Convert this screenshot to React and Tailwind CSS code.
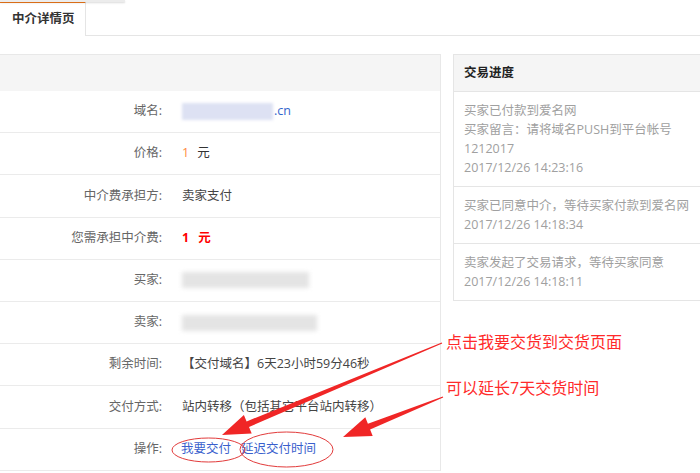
import React from "react";

const rows = [
  { label: "域名:", kind: "domain" },
  { label: "价格:", kind: "price" },
  { label: "中介费承担方:", kind: "text", text: "卖家支付" },
  { label: "您需承担中介费:", kind: "fee" },
  { label: "买家:", kind: "blur", w: "w-[127px]" },
  { label: "卖家:", kind: "blur", w: "w-[135px]" },
  { label: "剩余时间:", kind: "text", text: "【交付域名】6天23小时59分46秒" },
  { label: "交付方式:", kind: "text", text: "站内转移（包括其它平台站内转移）" },
  { label: "操作:", kind: "ops" },
];

const progress = [
  ["买家已付款到爱名网", "买家留言：请将域名PUSH到平台帐号", "1212017", "2017/12/26 14:23:16"],
  ["买家已同意中介，等待买家付款到爱名网", "2017/12/26 14:18:34"],
  ["卖家发起了交易请求，等待买家同意", "2017/12/26 14:18:11"],
];

function Value({ row }) {
  if (row.kind === "domain")
    return (
      <div className="flex items-center">
        <div className="w-[91px] h-[17px] bg-[#dde1f3] blur-[1.5px]" />
        <span className="text-[#3366cc] ml-[1px]">.cn</span>
      </div>
    );
  if (row.kind === "price")
    return (
      <span>
        <span className="text-[#ff8a3d]">1</span>
        <span className="ml-[8px] text-[#333]">元</span>
      </span>
    );
  if (row.kind === "fee")
    return (
      <span className="font-bold text-[#ff0000]">
        1<span className="ml-[9px]">元</span>
      </span>
    );
  if (row.kind === "blur")
    return <div className={`${row.w} h-[16px] bg-[#e4e4e4] blur-[2px]`} />;
  if (row.kind === "ops")
    return (
      <div className="flex gap-[10px] text-[#3a5fcd] -ml-[1px]">
        <span>我要交付</span>
        <span>延迟交付时间</span>
      </div>
    );
  return <span className="text-[#444]">{row.text}</span>;
}

export default function App() {
  return (
    <div className="relative w-[700px] h-[473px] overflow-hidden bg-white text-[12.5px] font-['Open_Sans','Noto_Sans_CJK_SC',sans-serif]">
      {/* faint dropdown edge above the tab */}
      <div className="absolute left-0 top-0 w-[125px] h-[2px] bg-[#ececec] shadow-[0_1px_2px_rgba(0,0,0,0.15)]" />

      {/* tab bar */}
      <div className="h-[36px] border-b border-[#e5e5e5] flex">
        <div className="mt-[1px] w-[86px] h-[35px] border-t-2 border-t-[#f27a1a] border-r border-r-[#e5e5e5] bg-white -mb-[1px] flex items-center pl-[12px] font-semibold text-[#333]">
          中介详情页
        </div>
      </div>

      <div className="flex mt-[18px] gap-[12px]">
        {/* detail table */}
        <div className="w-[442px] shrink-0 -ml-[1px] border border-[#e8e8e8] border-b-0">
          <div className="h-[36px] bg-[#f5f5f5]" />
          {rows.map((r) => (
            <div key={r.label} className="h-[42.2px] border-b border-[#ebebeb] flex items-center">
              <div className="w-[162px] text-right text-[#666]">{r.label}</div>
              <div className="pl-[20px]">
                <Value row={r} />
              </div>
            </div>
          ))}
        </div>

        {/* progress */}
        <div className="w-[260px] shrink-0 self-start border border-[#e5e5e5]">
          <div className="h-[36px] bg-[#f5f5f5] flex items-center pl-[10px] font-bold text-[#222]">
            交易进度
          </div>
          {progress.map((lines, i) => (
            <div key={i} className="border-t border-[#e5e5e5] px-[10px] py-[9px] leading-[19px] text-[#a0a0a0]">
              {lines.map((l) => (
                <div key={l}>{l}</div>
              ))}
            </div>
          ))}
        </div>
      </div>

      {/* annotations */}
      <div className="absolute left-[446px] top-[331px] text-[16px] leading-[22px] text-[#ff2a2a]">点击我要交货到交货页面</div>
      <div className="absolute left-[446px] top-[377px] text-[16px] leading-[22px] text-[#ff2a2a]">可以延长7天交货时间</div>

      <svg className="absolute inset-0 pointer-events-none" width="700" height="473">
        <polygon
          fill="#f02626"
          points="442.2,343.5 249.0,427.0 251.7,433.4 222,435 243.9,415.0 246.6,421.4 441.8,342.5"
        />
        <polygon
          fill="#f02626"
          points="443.2,397.5 370.1,429.4 372.7,435.9 343,437 365.3,417.3 367.9,423.8 442.8,396.5"
        />
        <ellipse cx="208.5" cy="450" rx="36.5" ry="12" fill="none" stroke="#e23b3b" strokeWidth="1" />
        <ellipse cx="286.5" cy="449.5" rx="46.5" ry="17.5" fill="none" stroke="#e23b3b" strokeWidth="1" />
      </svg>
    </div>
  );
}
